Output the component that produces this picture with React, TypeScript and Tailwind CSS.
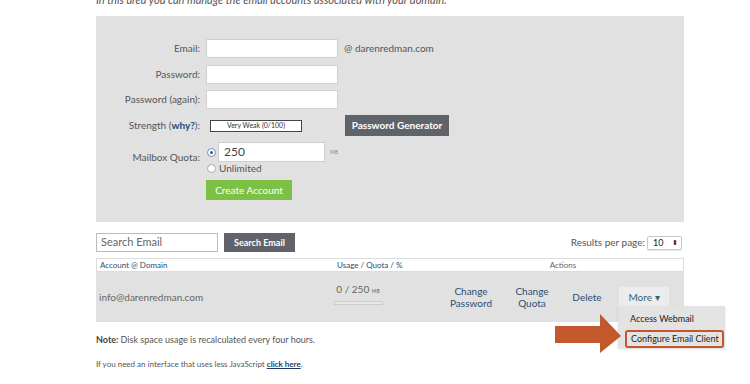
export default function App() {
  const font = "font-['Lato','Open_Sans',sans-serif]";
  return (
    <div className={`relative w-[750px] h-[384px] overflow-hidden bg-white ${font}`}>
      <div className="ml-[96px] w-[588px]">
        <p className="-mt-[7px] h-[23px] text-[11px] leading-[14px] italic text-[#555]">
          In this area you can manage the email accounts associated with your domain.
        </p>
        {/* form panel */}
        <div className="h-[206px] bg-[#e1e1e1] pt-[23px]">
          <div className="flex h-[19px] items-center">
            <div className="w-[105px] pr-[1px] text-right text-[10px] text-[#555]">Email:</div>
            <div className="ml-[5px] h-[19px] w-[132px] border border-[#cfcfcf] bg-white" />
            <div className="ml-[6px] text-[10px] text-[#555]">@ darenredman.com</div>
          </div>
          <div className="mt-[7px] flex h-[19px] items-center">
            <div className="w-[105px] pr-[1px] text-right text-[10px] text-[#555]">Password:</div>
            <div className="ml-[5px] h-[19px] w-[132px] border border-[#cfcfcf] bg-white" />
          </div>
          <div className="mt-[6px] flex h-[19px] items-center">
            <div className="w-[105px] pr-[1px] text-right text-[10px] text-[#555]">Password (again):</div>
            <div className="ml-[5px] h-[19px] w-[132px] border border-[#cfcfcf] bg-white" />
          </div>
          <div className="mt-[6px] flex h-[21px] items-center">
            <div className="w-[105px] pr-[1px] text-right text-[10px] text-[#555]">
              Strength (<span className="font-bold text-[#1f4a78]">why?</span>):
            </div>
            <div className="ml-[9px] flex h-[12px] w-[92px] items-center justify-center border border-[#444] bg-white text-[7px] text-[#333]">
              Very Weak (0/100)
            </div>
            <div className="ml-[43px] flex h-[21px] w-[104px] items-center justify-center bg-[#5f636a] text-[10px] font-bold text-white">
              Password Generator
            </div>
          </div>
          <div className="mt-[6px] flex items-center">
            <div className="w-[105px] pr-[1px] text-right text-[10px] text-[#555]">Mailbox Quota:</div>
            <div className="ml-[5px] flex flex-col">
              <div className="flex h-[20px] items-center">
                <div className="ml-[1px] flex h-[9px] w-[9px] items-center justify-center rounded-full border border-[#6f8fb8] bg-white">
                  <div className="h-[3px] w-[3px] rounded-full bg-[#2a5ea8]" />
                </div>
                <div className="ml-[2px] flex h-[20px] w-[107px] items-center border border-[#cfcfcf] bg-white pl-[5px] text-[12px] text-[#444]">
                  250
                </div>
                <div className="ml-[5px] mt-[2px] text-[5px] text-[#888]">MB</div>
              </div>
              <div className="mt-[1px] flex h-[10px] items-center">
                <div className="ml-[1px] h-[9px] w-[9px] rounded-full border border-[#aaa] bg-white" />
                <div className="ml-[3px] text-[10px] leading-[10px] text-[#555]">Unlimited</div>
              </div>
            </div>
          </div>
          <div className="ml-[110px] mt-[7px] flex h-[20px] w-[86px] items-center justify-center bg-[#7cc143] text-[10px] text-white">
            Create Account
          </div>
        </div>

        {/* search row */}
        <div className="mt-[11px] flex h-[19px] items-center">
          <div className="flex h-[19px] w-[122px] items-center border border-[#bbb] bg-white pl-[4px] text-[11px] text-[#666]">
            Search Email
          </div>
          <div className="ml-[6px] flex h-[19px] w-[71px] items-center justify-center bg-[#606369] text-[9px] font-bold text-white">
            Search Email
          </div>
          <div className="ml-auto flex items-center">
            <span className="text-[10px] text-[#555]">Results per page:</span>
            <div className="ml-[2px] mr-[2px] flex h-[14px] w-[35px] items-center justify-between rounded-[2px] border border-[#c8c8c8] bg-white pl-[5px] pr-[3px] text-[9px] text-[#222] shadow-[0_1px_1px_rgba(0,0,0,0.1)]">
              <span>10</span>
              <span className="text-[7px] leading-[7px]">⬍</span>
            </div>
          </div>
        </div>

        {/* table */}
        <div className="mt-[6px]">
          <div className="grid h-[14px] grid-cols-[234px_110px_244px] items-center border border-[#ddd] bg-white text-[8px] text-[#2b4d70]">
            <div className="pl-[3px]">Account @ Domain</div>
            <div className="pl-[6px]">Usage / Quota / %</div>
            <div className="text-center text-[#666]">Actions</div>
          </div>
          <div className="grid h-[50px] grid-cols-[234px_110px_244px] items-center bg-[#e1e1e1]">
            <div className="pl-[3px] text-[10px] text-[#666]">info@darenredman.com</div>
            <div className="flex flex-col items-start">
              <div className="ml-[3px] flex w-[50px] flex-col items-center">
                <div className="-mt-[7px] text-[10px] text-[#666]">
                  0 / 250 <span className="text-[5px]">MB</span>
                </div>
                <div className="mt-[4px] h-[4px] w-[49px] border border-[#ccc] bg-[#e8e8e8]" />
              </div>
            </div>
            <div className="flex items-center text-[10px] text-[#2d4f72]">
              <div className="w-[62px] text-center leading-[12px]">Change<br />Password</div>
              <div className="w-[60px] text-center leading-[12px]">Change<br />Quota</div>
              <div className="w-[50px] text-center">Delete</div>
              <div className="ml-[7px] flex h-[20px] w-[50px] items-center justify-center bg-[#ececec] text-[10px] text-[#2c6775]">
                More ▾
              </div>
            </div>
          </div>
        </div>

        <p className="mt-[11px] h-[14px] text-[9px] leading-[14px] text-[#555]">
          <span className="font-bold text-[#444]">Note:</span> Disk space usage is recalculated every four hours.
        </p>
        <p className="mt-[10px] h-[14px] text-[8px] leading-[14px] text-[#555]">
          If you need an interface that uses less JavaScript{" "}
          <span className="font-bold text-[#1f3a5e] underline">click here</span>.
        </p>
      </div>

      {/* dropdown menu */}
      <div className="absolute left-[618px] top-[306px] h-[42px] w-[107px] bg-[#e3e3e3] shadow-[0_1px_2px_rgba(0,0,0,0.15)]">
        <div className="ml-[12px] mt-[6px] text-[9px] text-[#222]">Access Webmail</div>
        <div className="ml-[7px] mt-[4px] flex h-[18px] w-[99px] items-center rounded-[3px] border-2 border-[#c1572b] pl-[4px] text-[9px] text-[#222]">
          Configure Email Client
        </div>
      </div>

      {/* arrow */}
      <svg className="absolute left-[555px] top-[314px]" width="67" height="39" viewBox="0 0 67 39">
        <polygon points="0,12 45,12 45,0 66,22 45,39 45,29 0,29" fill="#c2582b" />
      </svg>
    </div>
  );
}
